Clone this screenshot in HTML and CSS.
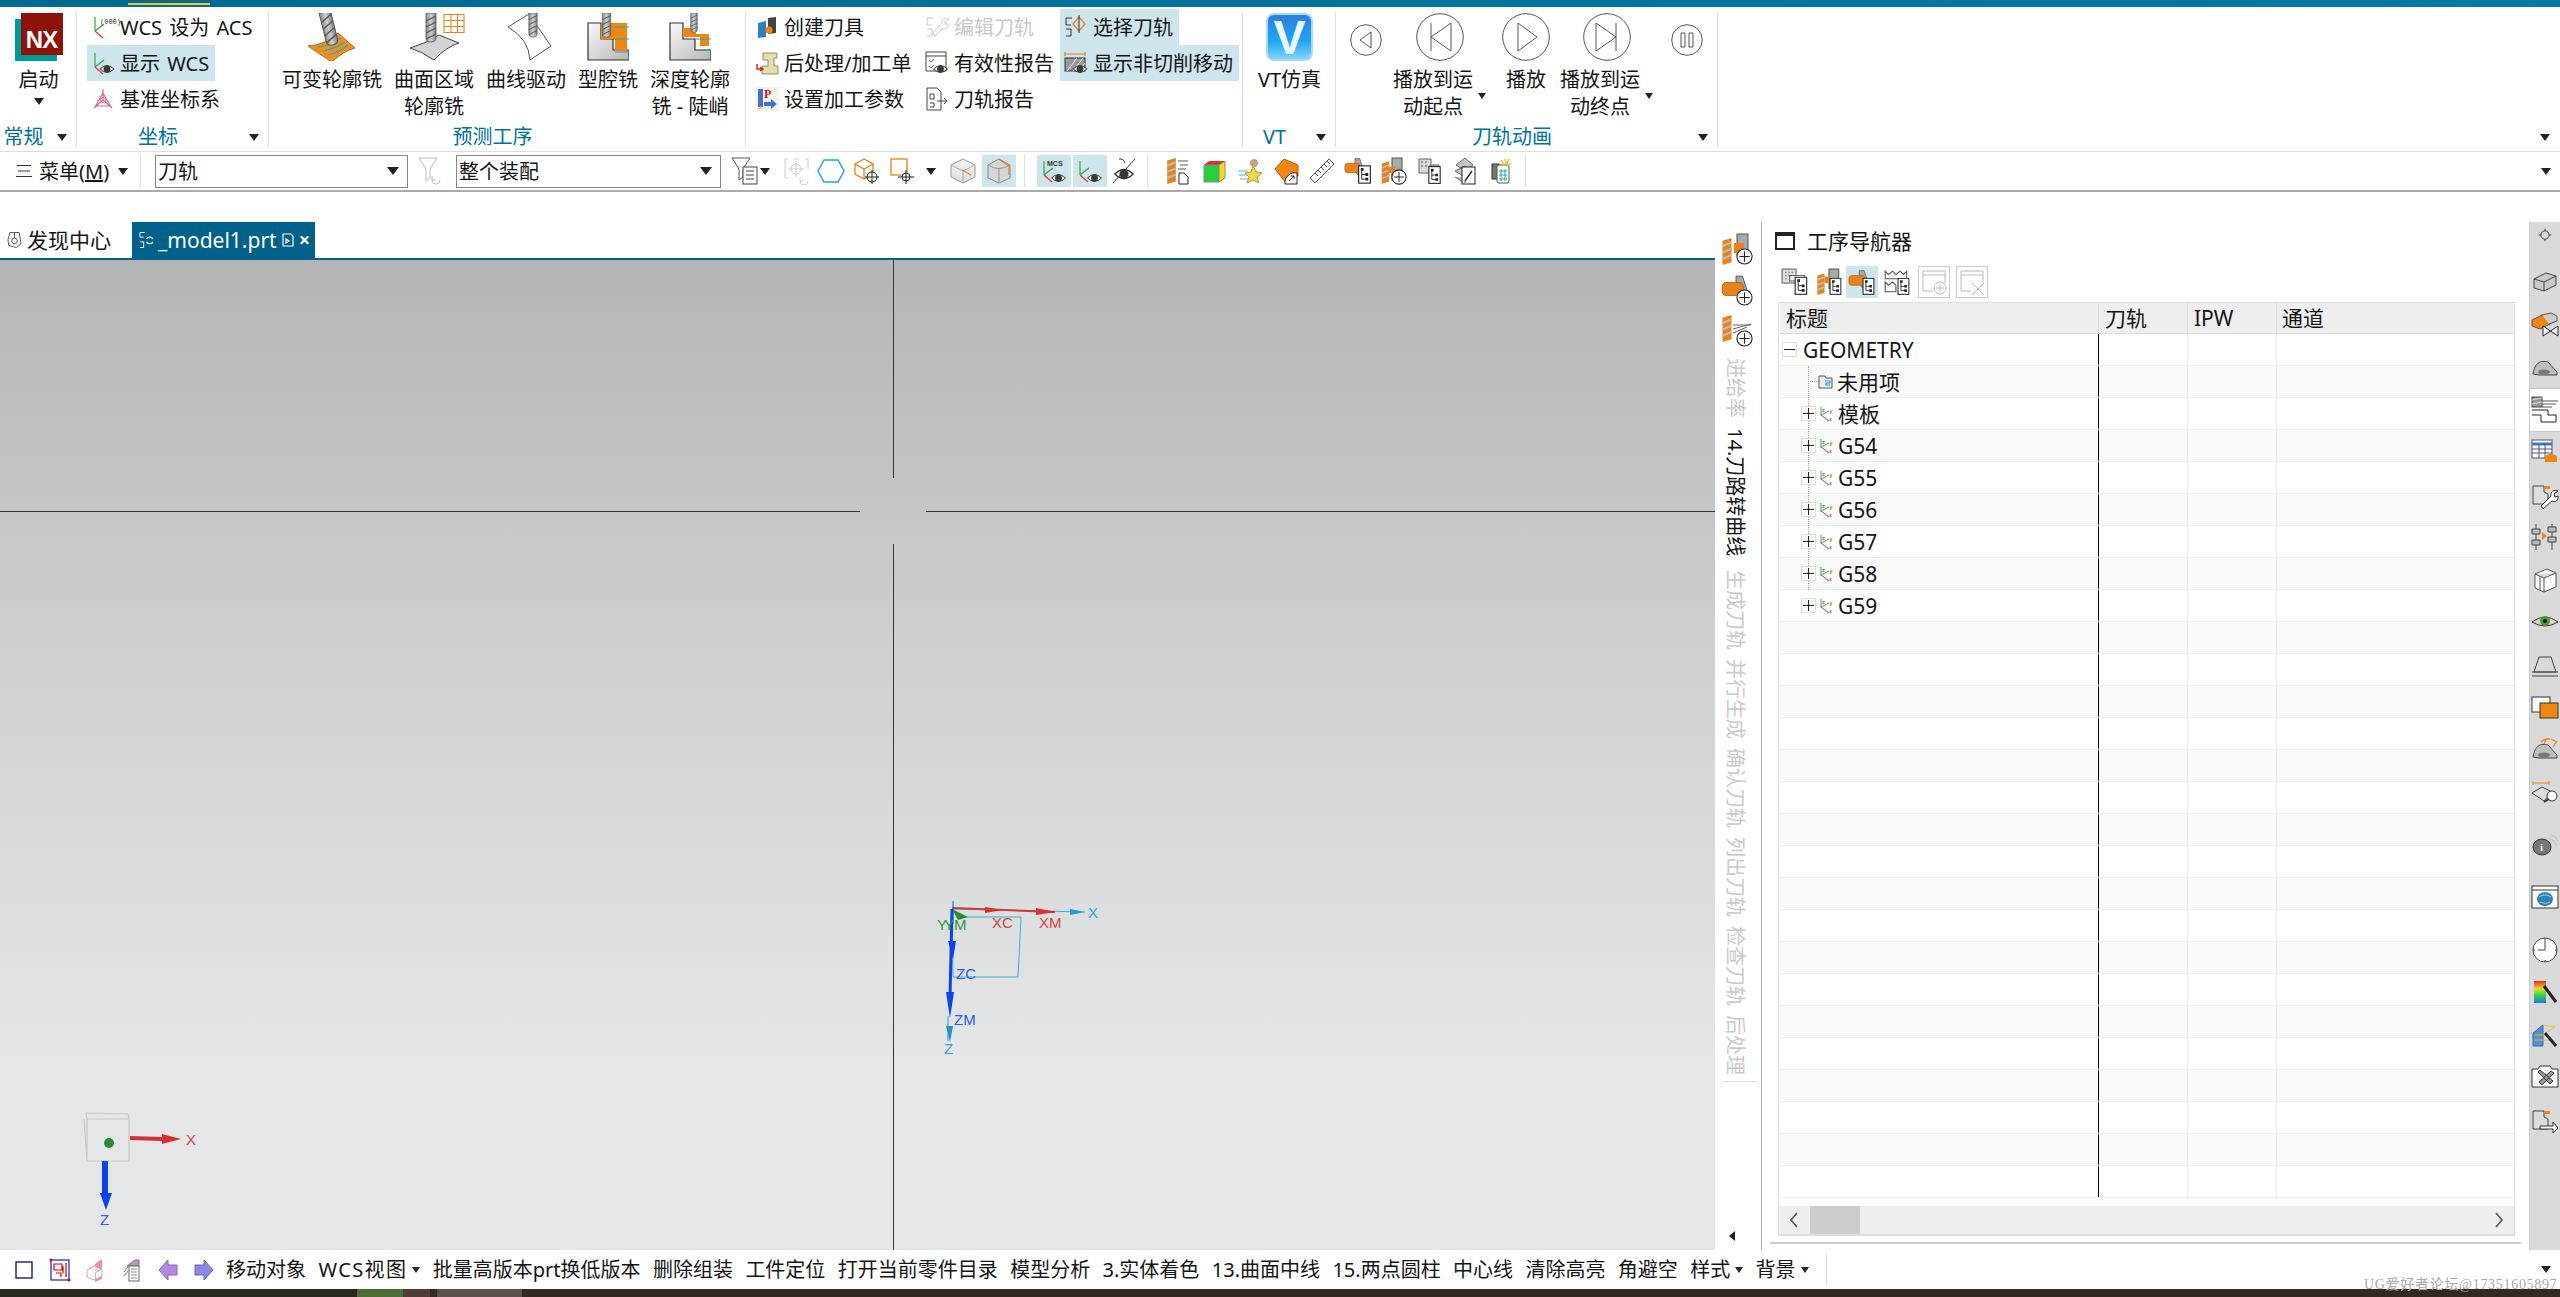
FILE: index.html
```html
<!DOCTYPE html>
<html lang="zh-CN">
<head>
<meta charset="utf-8">
<title>NX</title>
<link rel="stylesheet" href="styles.css">
</head>
<body>
<svg class="defs" width="0" height="0" aria-hidden="true">
  <defs>
    <linearGradient id="gDrill" x1="0" x2="1" y1="0" y2="0"><stop offset="0" stop-color="#8e8e8e"/><stop offset=".5" stop-color="#cfcfcf"/><stop offset="1" stop-color="#7d7d7d"/></linearGradient>
    <linearGradient id="gBlock" x1="0" x2="1" y1="0" y2="1"><stop offset="0" stop-color="#fafafa"/><stop offset="1" stop-color="#b5b5b5"/></linearGradient>
    <linearGradient id="gTop" x1="0" x2="0" y1="0" y2="1"><stop offset="0" stop-color="#f2f3f4"/><stop offset="1" stop-color="#dcdddf"/></linearGradient>
    <symbol id="drill" viewBox="0 0 12 30"><path d="M1 0h10v25q0 4-5 4t-5-4z" fill="url(#gDrill)" stroke="#555" stroke-width=".8"/><path d="M1 8l10-5M1 14l10-5M1 20l10-5M1 26l10-5" stroke="#555" stroke-width="1.2"/></symbol>
    <symbol id="ocut" viewBox="0 0 12 30"><path d="M1 3l10-3v27l-10 3z" fill="#e8821a"/><path d="M1 9l10-4M1 16l10-4M1 23l10-4" stroke="#bdbdbd" stroke-width="2.4"/></symbol>
    <symbol id="tree" viewBox="0 0 14 20"><rect x=".7" y=".7" width="12.6" height="18.6" fill="#fff" stroke="#222" stroke-width="1.2"/><path d="M4 5v10h5M4 10h5" fill="none" stroke="#222"/><path d="M3 3h3v3H3zM8 8.500h3v3H8zM8 13.500h3v3H8z" fill="#222"/></symbol>
    <symbol id="eye" viewBox="0 0 18 14"><path d="M1 7Q9-1 17 7Q9 15 1 7Z" fill="#fff" stroke="#333" stroke-width="1.200"/><circle cx="9" cy="7" r="4" fill="#3a3a3a"/></symbol>
    <symbol id="axes" viewBox="0 0 24 24"><path d="M4 2v14" stroke="#2eaa3c" stroke-width="1.200"/><path d="M4 16L13 9" stroke="#2eaa3c" stroke-width="1.200"/><path d="M4 16l8 7" stroke="#e8303a" stroke-width="1.200"/></symbol>
    <symbol id="csys" viewBox="0 0 15 16"><path d="M2 1v8l8-4" fill="none" stroke="#2eaa3c"/><path d="M2 9l8 6" stroke="#e8303a"/><text x="3" y="6" class="tiny">z</text><text x="10.500" y="7" class="tiny">y</text><text x="10" y="15" class="tiny">x</text></symbol>
    <symbol id="cyl" viewBox="0 0 28 28"><path d="M14 2l6 0 6 18-6 6-6-8z" fill="#a8a8a8" stroke="#444" stroke-width=".8"/><path d="M4 8h13q4 0 4 6t-4 6H4q-3 0-3-6t3-6z" fill="#e8821a" stroke="#b35d0a" stroke-width=".8"/></symbol>
    <symbol id="plus" viewBox="0 0 18 18"><circle cx="9" cy="9" r="8" fill="#fff" stroke="#222" stroke-width="1.200"/><path d="M9 3.500v11M3.500 9h11" stroke="#222" stroke-width="1.100"/></symbol>
    <symbol id="part" viewBox="0 0 28 28"><path d="M3 11l12-6 10 3v9l-12 6-10-3z" fill="#c9c9c9" stroke="#444"/><path d="M3 11l10 3 12-6M13 14v9" fill="none" stroke="#444"/></symbol>
    <symbol id="tool2" viewBox="0 0 28 28"><path d="M2 21c2-12 8-14 15-12l9 10v3H8z" fill="#bdbdbd" stroke="#444"/><ellipse cx="13" cy="19" rx="6" ry="2.500" fill="#777"/></symbol>
  </defs>
</svg>

<div class="topbar"><span class="accent"></span></div>

<header class="ribbon">
  <section class="group g1">
    <div class="body center">
      <div class="tool">
        <div class="nx"><span class="nx-red">NX</span></div>
        <span class="label">启动</span>
        <span class="tri tri-start"></span>
      </div>
    </div>
    <div class="glabel"><span>常规</span><i class="tri"></i></div>
  </section>

  <section class="group g2">
    <div class="body stack">
      <div class="row"><svg class="ic"><use href="#axes"/><text x="9" y="9" class="tiny2">(000)</text></svg><span>WCS 设为 ACS</span></div>
      <div class="row on"><svg class="ic"><use href="#axes"/><use href="#eye" x="8" y="12" width="16" height="12"/></svg><span>显示 WCS</span></div>
      <div class="row"><svg class="ic" viewBox="0 0 24 24"><path d="M12 2v11L3 21M12 13l9 8M5 19h14M12 6L4 20M12 6l8 14" fill="none" stroke="#d9668c" stroke-width="1.200"/><circle cx="12" cy="13" r="2.500" fill="none" stroke="#d9668c"/></svg><span>基准坐标系</span></div>
    </div>
    <div class="glabel"><span>坐标</span><i class="tri"></i></div>
  </section>

  <section class="group g3">
    <div class="body tools">
      <div class="tool">
        <svg class="big" viewBox="0 0 62 48"><path d="M7 33Q24 32 37 20L54 35Q42 38 31 49Q20 42 7 33Z" fill="#ef8f1c" stroke="#b86a0c"/><path d="M16 34Q30 33 40 25M22 38Q34 36 44 29M27 42Q38 39 47 32" fill="none" stroke="#2aa7c9" stroke-width="1.200"/><use href="#drill" x="21" y="-2" width="14" height="36" transform="rotate(-14 28 16)"/></svg>
        <span class="label">可变轮廓铣</span>
      </div>
      <div class="tool">
        <svg class="big" viewBox="0 0 62 48"><path d="M7 35Q22 31 36 22L56 30Q43 34 31 47Q20 39 7 35Z" fill="#d4d4d4" stroke="#444"/><use href="#drill" x="21" y="0" width="14" height="30"/><path d="M41 1.500h20v18H41zM48 1.500v18M54.500 1.500v18M41 7.500h20M41 13.500h20" fill="#fff" stroke="#e8821a" stroke-width="1.100"/></svg>
        <span class="label">曲面区域<br>轮廓铣</span>
      </div>
      <div class="tool">
        <svg class="big" viewBox="0 0 62 48"><path d="M13 14L34 1 56 33 35 47Q34 26 13 14Z" fill="#fff" stroke="#555"/><use href="#drill" x="31" y="0" width="14" height="25"/></svg>
        <span class="label">曲线驱动</span>
      </div>
      <div class="tool">
        <svg class="big big-s" viewBox="0 0 42 48"><path d="M1 10h13v16h12v11h16v10H1z" fill="url(#gBlock)" stroke="#333" stroke-width="1.200"/><path d="M14 10h26v28H28V26H14z" fill="#ef860f"/><use href="#drill" x="13" y="0" width="13" height="25"/><path d="M28 14h14M28 26h14M28 39h14" stroke="#1ea3c7" stroke-width="1.200"/></svg>
        <span class="label">型腔铣</span>
      </div>
      <div class="tool">
        <svg class="big big-s" viewBox="0 0 42 48"><path d="M1 10h13v16h12v11h16v10H1z" fill="url(#gBlock)" stroke="#333" stroke-width="1.200"/><path d="M14 15h13v6h13v12h-9V24H14z" fill="#ef860f"/><use href="#drill" x="20" y="0" width="10" height="20"/><path d="M26 26h16M32 37h10" stroke="#1ea3c7" stroke-width="1.200"/></svg>
        <span class="label">深度轮廓<br>铣 - 陡峭</span>
      </div>
    </div>
    <div class="glabel"><span>预测工序</span><i class="none"></i></div>
  </section>

  <section class="group g4">
    <div class="body cols">
      <div class="stack col-a">
        <div class="row"><svg class="ic" viewBox="0 0 24 24"><path d="M3 8l8-2v16l-8 1z" fill="#2c7fc0"/><path d="M13 3l8-1v16l-8 1z" fill="#444"/><circle cx="14" cy="15" r="3.500" fill="#ef860f"/></svg><span>创建刀具</span></div>
        <div class="row"><svg class="ic" viewBox="0 0 24 24"><path d="M8 2h14v5h-3v8h4v8H7v-8h6V9H8z" fill="#e4e0a8" stroke="#777" stroke-width=".8"/><path d="M2 13v5h6M5 16l3 2-3 2" fill="none" stroke="#e02020" stroke-width="1.500"/></svg><span>后处理/加工单</span></div>
        <div class="row"><svg class="ic" viewBox="0 0 24 24"><rect width="24" height="24" fill="#f3f3ec"/><path d="M3 2h5v18H3z" fill="#3f6fd0"/><text x="9" y="11" class="p">P</text><path d="M9 15h7v-3l6 5-6 5v-3H9z" fill="#3f6fd0"/><path d="M2 22l4-3 2 3z" fill="#ecd34a"/></svg><span>设置加工参数</span></div>
      </div>
      <div class="stack col-b">
        <div class="row off"><svg class="ic" viewBox="0 0 24 24"><path d="M8 3H2v7h5M2 14h5v7H2" fill="none" stroke="#c8c8c8"/><path d="M8 17l9-9c0-4 4-6 7-4l-4 3v2h3c1 4-3 6-6 5l-7 7z" fill="#fff" stroke="#c8c8c8"/></svg><span>编辑刀轨</span></div>
        <div class="row"><svg class="ic" viewBox="0 0 24 24"><path d="M1 1h20v19H1zM1 5h20" fill="#fff" stroke="#444"/><path d="M4 9l2 2 3-3" fill="none" stroke="#2aa83a"/><path d="M4 15l2 2 3-3" fill="none" stroke="#e02020"/><use href="#eye" x="7" y="12" width="17" height="12"/></svg><span>有效性报告</span></div>
        <div class="row"><svg class="ic" viewBox="0 0 24 24"><path d="M2 1h10l4 4v18H2zM5 7h4v5H5zM5 16h4v4H5" fill="#fff" stroke="#444"/><path d="M12 14h10M19 11l3 3-3 3" fill="none" stroke="#444"/></svg><span>刀轨报告</span></div>
      </div>
      <div class="stack">
        <div class="row on"><svg class="ic" viewBox="0 0 24 24"><path d="M8 3H2v7h5M2 14h5v7H2" fill="none" stroke="#333"/><path d="M15 2l6 7-6 7-6-7z" fill="none" stroke="#e8821a" stroke-width="1.300"/><path d="M15 0v18" stroke="#333"/></svg><span>选择刀轨</span></div>
        <div class="row on"><svg class="ic" viewBox="0 0 24 24"><path d="M1 3h20M1 1v4M21 1v4" stroke="#e8821a" stroke-width="1.200"/><rect x="1" y="7" width="20" height="13" fill="#9a9a9a" stroke="#333"/><path d="M3 20l10-13M9 20l10-13M15 20l6-8" stroke="#fff"/><use href="#eye" x="8" y="12" width="16" height="12"/></svg><span>显示非切削移动</span></div>
      </div>
    </div>
    <div class="glabel"><span class="hidden">工序</span><i class="none"></i></div>
  </section>

  <section class="group g5">
    <div class="body center">
      <div class="tool">
        <div class="vt"><span>V</span></div>
        <span class="label">VT仿真</span>
      </div>
    </div>
    <div class="glabel"><span>VT</span><i class="tri"></i></div>
  </section>

  <section class="group g6">
    <div class="body anim">
      <svg class="ctl-s" viewBox="0 0 32 32"><circle cx="16" cy="16" r="15.300" fill="none" stroke="#555"/><path d="M21 8v16L10 16z" fill="none" stroke="#555"/></svg>
      <div class="tool more first-more">
        <svg class="ctl ctl-off" viewBox="0 0 48 48"><circle cx="24" cy="24" r="23.300" fill="none" stroke="#555"/><path d="M15 10v28M35 10v28L15 24z" fill="none" stroke="#555"/></svg>
        <span class="label">播放到运<br>动起点</span>
        <i class="tri tri-more"></i>
      </div>
      <div class="tool play">
        <svg class="ctl" viewBox="0 0 48 48"><circle cx="24" cy="24" r="23.300" fill="none" stroke="#555"/><path d="M16 10v28l19-14z" fill="none" stroke="#555"/></svg>
        <span class="label">播放</span>
      </div>
      <div class="tool more">
        <svg class="ctl ctl-off" viewBox="0 0 48 48"><circle cx="24" cy="24" r="23.300" fill="none" stroke="#555"/><path d="M33 10v28M13 10v28l20-14z" fill="none" stroke="#555"/></svg>
        <span class="label">播放到运<br>动终点</span>
        <i class="tri tri-more"></i>
      </div>
      <svg class="ctl-s" viewBox="0 0 32 32"><circle cx="16" cy="16" r="15.300" fill="none" stroke="#555"/><path d="M10 9h4v14h-4zM18 9h4v14h-4z" fill="none" stroke="#555"/></svg>
    </div>
    <div class="glabel"><span>刀轨动画</span><i class="tri"></i></div>
  </section>

  <section class="group g7">
    <div class="body"></div>
    <div class="glabel"><span class="hidden">空</span><i class="tri"></i></div>
  </section>
</header>

<nav class="toolbar">
  <svg class="burger" viewBox="0 0 16 14"><path d="M1 1.500h14M2 7h12M0 12.500h16" stroke="#333"/></svg>
  <span class="menu">菜单(<u>M</u>)</span><i class="tri tri-menu"></i>
  <span class="vsep sep-menu"></span>
  <div class="select sel-a"><span>刀轨</span><i class="tri tri-big"></i></div>
  <svg class="btn-ic funnel" viewBox="0 0 26 28"><path d="M1 1h18l-7 11v9l-4 3V12z" fill="#fff" stroke="#bbb"/><path d="M14 23a4 4 0 1 0 8 0M14 19v4h4" fill="none" stroke="#bbb"/></svg>
  <div class="select sel-b"><span>整个装配</span><i class="tri tri-big"></i></div>
  <button class="tb w30 ml9"><svg viewBox="0 0 28 28"><path d="M1 1h18l-7 11v8l-4 3V12z" fill="#fff" stroke="#555"/><rect x="12" y="10" width="14" height="17" fill="#fff" stroke="#444"/><path d="M15 14h8M15 18h8M15 22h8" stroke="#444"/></svg></button>
  <i class="tri tri-tb"></i>
  <button class="tb ml10"><svg viewBox="0 0 28 28"><path d="M5 2H2v19h3M22 2h3v10M11 2h5" fill="none" stroke="#ccc"/><circle cx="13" cy="12" r="5" fill="none" stroke="#ccc"/><path d="M13 4v16M5 12h16M17 24a4 4 0 1 0 8 0M17 20v4h4" fill="none" stroke="#ccc"/></svg></button>
  <button class="tb"><svg viewBox="0 0 28 28"><path d="M7 3h14l6 11-6 11H7L1 14z" fill="none" stroke="#19a5d6" stroke-width="1.400"/></svg></button>
  <button class="tb ml3"><svg viewBox="0 0 28 28"><path d="M1 7l9-5 9 5v10l-9 5-9-5zM1 7l9 5 9-5M10 12v10" fill="none" stroke="#e8821a" stroke-width="1.300"/><circle cx="18" cy="20" r="5" fill="#fff" stroke="#222"/><path d="M18 13v14M11 20h14" stroke="#222"/></svg></button>
  <button class="tb ml1"><svg viewBox="0 0 28 28"><rect x="2" y="2" width="16" height="16" fill="none" stroke="#e8821a" stroke-width="1.300"/><circle cx="17" cy="20" r="4" fill="#fff" stroke="#222"/><path d="M17 13v14M9 20h16" stroke="#222"/></svg></button>
  <i class="tri tri-tb ml6"></i>
  <button class="tb ml10"><svg viewBox="0 0 28 28"><path d="M2 8l12-6 12 6v12l-12 6-12-6z" fill="url(#gTop)" stroke="#999"/><path d="M2 8l12 6 12-6M14 14v12" fill="none" stroke="#aaa"/><path d="M13 13l9 5" stroke="#e8821a" stroke-width="1.300"/></svg></button>
  <button class="tb on ml2"><svg viewBox="0 0 28 28"><path d="M3 8l11-6 11 6v13l-11 5-11-5z" fill="#d6d6d6" stroke="#888"/><path d="M3 8q11 7 22 0M14 12v14" fill="none" stroke="#999"/><path d="M14 2l10 7v9" fill="none" stroke="#e8821a" stroke-width="1.200"/></svg></button>
  <span class="vsep sep-a"></span>
  <button class="tb on"><svg viewBox="0 0 28 28"><use href="#axes" x="0" y="2" width="24" height="24"/><text x="7" y="9" class="tiny3">MCS</text><use href="#eye" x="10" y="15" width="17" height="12"/></svg></button>
  <button class="tb on ml2"><svg viewBox="0 0 28 28"><use href="#axes" x="0" y="2" width="24" height="24"/><use href="#eye" x="10" y="15" width="17" height="12"/></svg></button>
  <button class="tb"><svg viewBox="0 0 28 28"><use href="#eye" x="3" y="9" width="22" height="16"/><path d="M3 26L25 2M9 2a5 5 0 0 1 6 4" fill="none" stroke="#333"/></svg></button>
  <span class="vsep sep-b"></span>
  <button class="tb t36"><svg viewBox="0 0 28 28"><use href="#ocut" x="2" y="1" width="11" height="26"/><path d="M14 4h10M16 8h8M14 12h8" stroke="#555"/><path d="M15 16h5l4 4v7h-9z" fill="#fff" stroke="#222"/></svg></button>
  <button class="tb t36"><svg viewBox="0 0 28 28"><path d="M4 8l5-4h16v4l-5 4z" fill="#e62b2b"/><rect x="4" y="8" width="15" height="17" fill="#22d13c" stroke="#888"/><path d="M19 8l6-4v17l-6 4z" fill="#f1dd1d" stroke="#888"/></svg></button>
  <button class="tb t36"><svg viewBox="0 0 28 28"><path d="M2 14h10M3 18h9M4 22h9" stroke="#5fa9e0"/><path d="M17 9l3 6 6 1-5 4 2 6-6-3-6 3 2-6-4-4 6-1z" fill="#f3d552" stroke="#b79a20"/><circle cx="18" cy="6" r="4" fill="#c8a47e"/></svg></button>
  <button class="tb t36"><svg viewBox="0 0 28 28"><path d="M3 12L12 2l14 6v11l-12 7z" fill="#ef860f" stroke="#b35d0a"/><path d="M13 27a10 10 0 0 1 12-11v11z" fill="#fff" stroke="#222"/><path d="M17 24l5-5M19 19h3v3" fill="none" stroke="#222"/></svg></button>
  <button class="tb t36"><svg viewBox="0 0 28 28"><path d="M2 21L21 2l5 5L7 26z" fill="#fff" stroke="#555"/><path d="M7 16l3 3M10 13l3 3M13 10l3 3M16 7l3 3M19 4l3 3" stroke="#555"/></svg></button>
  <button class="tb t36"><svg viewBox="0 0 28 28"><use href="#cyl" x="0" y="0" width="22" height="22"/><use href="#tree" x="14" y="8" width="13" height="19"/></svg></button>
  <button class="tb t36"><svg viewBox="0 0 28 28"><use href="#ocut" x="1" y="4" width="9" height="23"/><rect x="12" y="1" width="10" height="22" fill="#aaa" stroke="#555"/><rect x="8" y="10" width="7" height="6" fill="#e8821a"/><use href="#plus" x="11" y="12" width="16" height="16"/></svg></button>
  <button class="tb t36"><svg viewBox="0 0 28 28"><path d="M3 2h12v14H3z" fill="#d8d8d8" stroke="#666"/><path d="M5 5h2M9 5h2M5 9h2M9 9h2" stroke="#555"/><path d="M14 8h9v3H14z" fill="#bbb" stroke="#666"/><use href="#tree" x="12" y="9" width="13" height="18"/></svg></button>
  <button class="tb t36"><svg viewBox="0 0 28 28"><path d="M4 8l9-7 8 7-8 6zM3 14l10 6 9-6-9-5zM3 20l10 6 9-6" fill="#c4c4c4" stroke="#666"/><rect x="10" y="10" width="13" height="17" fill="#fff" stroke="#222"/><path d="M13 24l7-10" stroke="#222" stroke-width="1.400"/><path d="M12 25l2 0" stroke="#e02020"/></svg></button>
  <button class="tb t36"><svg viewBox="0 0 28 28"><rect x="4" y="7" width="7" height="15" fill="#777" stroke="#333"/><rect x="9" y="8" width="12" height="18" rx="2" fill="#fff" stroke="#555"/><path d="M11 14h8M11 18h8M11 22h8M13 12v12M17 12v12" stroke="#27a2a6"/><path d="M17 2l1 5M21 2l-2 5M23 6l-4 3M13 3l3 5" stroke="#e1c21c" stroke-width="1.400"/></svg></button>
  <span class="vsep sep-c"></span>
  <i class="tri tri-end"></i>
</nav>

<main class="main">
  <div class="left">
    <div class="tabs">
      <div class="tab"><svg class="tab-ic" viewBox="0 0 16 18"><path d="M3 1h10l2 12-5 4-8-2-1-6z" fill="#fff" stroke="#555"/><circle cx="8" cy="10" r="3" fill="none" stroke="#555"/><path d="M8 1v6" stroke="#555"/></svg><span>发现中心</span></div>
      <div class="tab tab-on">
        <svg class="tab-ic2" viewBox="0 0 16 18"><path d="M6 1H1v5h4M1 11h4v6H1" fill="none" stroke="#fff"/><path d="M8 8a4 4 0 0 1 7 0M15 11a4 4 0 0 1-7 0" fill="none" stroke="#fff" stroke-width="1.200"/></svg>
        <span>_model1.prt</span>
        <svg class="tab-ic3" viewBox="0 0 12 14"><path d="M1 1h8l2 2v10H1zM4 6l3 2-3 2z" fill="none" stroke="#fff" stroke-width="1.200"/></svg>
        <span class="close">×</span>
      </div>
    </div>
    <div class="viewport">
      <span class="cross v1"></span><span class="cross v2"></span><span class="cross h1"></span><span class="cross h2"></span>
      <svg class="triad-main" viewBox="0 0 240 190">
        <path d="M52 36L53 98H118L121 38H56" fill="none" stroke="#3cafd8" stroke-width="1"/>
        <path d="M53 22V45" stroke="#19a5d6" stroke-width="1.500"/>
        <path d="M52 30L185 33" stroke="#3cafd8"/>
        <path d="M170 30l15 3-15 3z" fill="#1d9dd0"/>
        <path d="M52 29L155 33" stroke="#c93a3a" stroke-width="2"/>
        <path d="M85 28l18 3-18 3zM136 29l20 4-20 3z" fill="#d83232"/>
        <path d="M52 30L68 38 58 41z" fill="#2a8a34"/>
        <path d="M48 137V162" stroke="#2a9ed0"/>
        <path d="M46 147h7l-3 16z" fill="#1d94c6"/>
        <path d="M52 30L50 118" stroke="#0b43ea" stroke-width="3"/>
        <path d="M46 113h8l-4 26zM48 62h8l-3 18z" fill="#0b43ea"/>
        <text x="92" y="49" class="tr red">XC</text>
        <text x="139" y="49" class="tr red">XM</text>
        <text x="188" y="39" class="tr cyan">X</text>
        <text x="37" y="51" class="tr green">Y</text>
        <text x="44" y="51" class="tr green">YM</text>
        <text x="56" y="100" class="tr blue">ZC</text>
        <text x="54" y="146" class="tr blue">ZM</text>
        <text x="44" y="175" class="tr cyan">Z</text>
      </svg>
      <svg class="triad-mini" viewBox="0 0 170 150">
        <path d="M36 24l42 1 1 5H37zM37 30v42h42V30M34 30l3 42" fill="none" stroke="#c9c9c9" stroke-width="1.200"/>
        <circle cx="59" cy="54" r="5" fill="#2a8a34"/>
        <path d="M80 47l32 1v-3l19 5-19 5v-3l-32-1z" fill="#d62f33"/>
        <path d="M52 72h6v32h4l-6 17-6-17h2z" fill="#0b43ea"/>
        <text x="136" y="56" class="tr red">X</text>
        <text x="50" y="136" class="tr blue">Z</text>
      </svg>
    </div>
  </div>

  <aside class="side">
    <svg class="side-ic" viewBox="0 0 32 32"><use href="#ocut" x="0" y="5" width="12" height="27"/><rect x="16" y="1" width="11" height="21" fill="#aaa" stroke="#555"/><rect x="13" y="10" width="10" height="10" fill="#e8821a"/><use href="#plus" x="15" y="15" width="17" height="17"/></svg>
    <svg class="side-ic" viewBox="0 0 32 32"><use href="#cyl" x="0" y="0" width="30" height="30"/><use href="#plus" x="15" y="15" width="17" height="17"/></svg>
    <svg class="side-ic" viewBox="0 0 32 32"><use href="#ocut" x="0" y="0" width="12" height="27"/><path d="M12 10h18M12 14l18-5M12 18l14-6" stroke="#666"/><use href="#plus" x="15" y="15" width="17" height="17"/></svg>
    <div class="vtabs">
      <span class="vt-off">进给率</span>
      <span class="vt-on">14.刀路转曲线</span>
      <span class="vt-off">生成刀轨</span>
      <span class="vt-off">并行生成</span>
      <span class="vt-off">确认刀轨</span>
      <span class="vt-off">列出刀轨</span>
      <span class="vt-off">检查刀轨</span>
      <span class="vt-off">后处理</span>
    </div>
    <span class="side-rule"></span>
    <i class="tri-left"></i>
  </aside>

  <section class="panel">
    <div class="ptitle"><span class="winbox"></span><span>工序导航器</span></div>
    <div class="pbtns">
      <button class="pb"><svg viewBox="0 0 26 26"><rect x="1" y="1" width="13" height="13" fill="#ddd" stroke="#666"/><path d="M4 4h1M7 4h1M10 4h1M4 7h1M7 7h1M4 10h1" stroke="#444"/><path d="M8 7h14v5H8z" fill="#eee" stroke="#666"/><use href="#tree" x="12" y="8" width="13" height="17"/></svg></button>
      <button class="pb"><svg viewBox="0 0 26 26"><use href="#ocut" x="1" y="5" width="9" height="20"/><rect x="13" y="1" width="9" height="18" fill="#aaa" stroke="#555"/><rect x="9" y="8" width="6" height="6" fill="#e8821a"/><use href="#tree" x="13" y="9" width="12" height="16"/></svg></button>
      <button class="pb on"><svg viewBox="0 0 26 26"><use href="#cyl" x="0" y="1" width="21" height="21"/><use href="#tree" x="13" y="9" width="12" height="16"/></svg></button>
      <button class="pb"><svg viewBox="0 0 26 26"><path d="M2 3l3 3 4-3 3 3 4-3 3 3 3-3v7H2zM2 13l3 3 4-3 3 3v6H2z" fill="#fff" stroke="#555"/><use href="#tree" x="13" y="9" width="12" height="16"/></svg></button>
      <button class="pb box"><svg viewBox="0 0 30 30"><path d="M4 24V4h22v12M4 8h22M4 24h10" fill="none" stroke="#bbb"/><circle cx="21" cy="21" r="6" fill="#fff" stroke="#bbb"/><path d="M21 17v8M17 21h8" stroke="#bbb"/></svg></button>
      <button class="pb box"><svg viewBox="0 0 30 30"><path d="M4 24V4h22v12M4 8h22M4 24h10M15 16l12 12M27 16L15 28" fill="none" stroke="#bbb"/></svg></button>
    </div>
    <div class="table">
      <div class="thead">
        <span class="c1">标题</span><span class="c2">刀轨</span><span class="c3">IPW</span><span class="c4">通道</span>
      </div>
      <div class="tbody">
        <span class="dots"></span>
        <div class="tr-row"><div class="c1 lvl0"><span class="tw"><i class="h"></i></span><span class="nm">GEOMETRY</span></div><div class="c2"></div><div class="c3"></div><div class="c4"></div></div>
        <div class="tr-row"><div class="c1 lvl1"><span class="tw-none"></span><svg class="node" viewBox="0 0 15 16"><path d="M1 2h6l1 2h6v10H1z" fill="#eee" stroke="#555"/><path d="M7 7h5v2H8v2h4" fill="none" stroke="#19a5d6" stroke-width="1.200"/></svg><span class="nm">未用项</span></div><div class="c2"></div><div class="c3"></div><div class="c4"></div></div>
        <div class="tr-row"><div class="c1 lvl1"><span class="tw"><i class="h"></i><i class="v"></i></span><svg class="node"><use href="#csys"/></svg><span class="nm">模板</span></div><div class="c2"></div><div class="c3"></div><div class="c4"></div></div>
        <div class="tr-row"><div class="c1 lvl1"><span class="tw"><i class="h"></i><i class="v"></i></span><svg class="node"><use href="#csys"/></svg><span class="nm">G54</span></div><div class="c2"></div><div class="c3"></div><div class="c4"></div></div>
        <div class="tr-row"><div class="c1 lvl1"><span class="tw"><i class="h"></i><i class="v"></i></span><svg class="node"><use href="#csys"/></svg><span class="nm">G55</span></div><div class="c2"></div><div class="c3"></div><div class="c4"></div></div>
        <div class="tr-row"><div class="c1 lvl1"><span class="tw"><i class="h"></i><i class="v"></i></span><svg class="node"><use href="#csys"/></svg><span class="nm">G56</span></div><div class="c2"></div><div class="c3"></div><div class="c4"></div></div>
        <div class="tr-row"><div class="c1 lvl1"><span class="tw"><i class="h"></i><i class="v"></i></span><svg class="node"><use href="#csys"/></svg><span class="nm">G57</span></div><div class="c2"></div><div class="c3"></div><div class="c4"></div></div>
        <div class="tr-row"><div class="c1 lvl1"><span class="tw"><i class="h"></i><i class="v"></i></span><svg class="node"><use href="#csys"/></svg><span class="nm">G58</span></div><div class="c2"></div><div class="c3"></div><div class="c4"></div></div>
        <div class="tr-row"><div class="c1 lvl1"><span class="tw"><i class="h"></i><i class="v"></i></span><svg class="node"><use href="#csys"/></svg><span class="nm">G59</span></div><div class="c2"></div><div class="c3"></div><div class="c4"></div></div>
        <div class="tr-row"><div class="c1"></div><div class="c2"></div><div class="c3"></div><div class="c4"></div></div>
        <div class="tr-row"><div class="c1"></div><div class="c2"></div><div class="c3"></div><div class="c4"></div></div>
        <div class="tr-row"><div class="c1"></div><div class="c2"></div><div class="c3"></div><div class="c4"></div></div>
        <div class="tr-row"><div class="c1"></div><div class="c2"></div><div class="c3"></div><div class="c4"></div></div>
        <div class="tr-row"><div class="c1"></div><div class="c2"></div><div class="c3"></div><div class="c4"></div></div>
        <div class="tr-row"><div class="c1"></div><div class="c2"></div><div class="c3"></div><div class="c4"></div></div>
        <div class="tr-row"><div class="c1"></div><div class="c2"></div><div class="c3"></div><div class="c4"></div></div>
        <div class="tr-row"><div class="c1"></div><div class="c2"></div><div class="c3"></div><div class="c4"></div></div>
        <div class="tr-row"><div class="c1"></div><div class="c2"></div><div class="c3"></div><div class="c4"></div></div>
        <div class="tr-row"><div class="c1"></div><div class="c2"></div><div class="c3"></div><div class="c4"></div></div>
        <div class="tr-row"><div class="c1"></div><div class="c2"></div><div class="c3"></div><div class="c4"></div></div>
        <div class="tr-row"><div class="c1"></div><div class="c2"></div><div class="c3"></div><div class="c4"></div></div>
        <div class="tr-row"><div class="c1"></div><div class="c2"></div><div class="c3"></div><div class="c4"></div></div>
        <div class="tr-row"><div class="c1"></div><div class="c2"></div><div class="c3"></div><div class="c4"></div></div>
        <div class="tr-row"><div class="c1"></div><div class="c2"></div><div class="c3"></div><div class="c4"></div></div>
        <div class="tr-row"><div class="c1"></div><div class="c2"></div><div class="c3"></div><div class="c4"></div></div>
        <div class="tr-row"><div class="c1"></div><div class="c2"></div><div class="c3"></div><div class="c4"></div></div>
        <div class="tr-row"><div class="c1"></div><div class="c2"></div><div class="c3"></div><div class="c4"></div></div>
      </div>
      <div class="hscroll">
        <svg class="sc-arrow" viewBox="0 0 10 16"><path d="M8 1L2 8l6 7" fill="none" stroke="#555" stroke-width="1.600"/></svg>
        <span class="thumb"></span>
        <svg class="sc-arrow sc-right" viewBox="0 0 10 16"><path d="M2 1l6 7-6 7" fill="none" stroke="#555" stroke-width="1.600"/></svg>
      </div>
    </div>
    <div class="pfoot"></div>
  </section>

  <aside class="rail">
    <button class="rb first"><svg viewBox="0 0 26 26"><circle cx="13" cy="13" r="6" fill="none" stroke="#333" stroke-width="1.300"/><path d="M13 4v3M13 19v3M4 13h3M19 13h3" stroke="#333" stroke-width="1.300"/></svg></button>
    <button class="rb second"><svg viewBox="0 0 28 28"><use href="#part"/></svg></button>
    <button class="rb"><svg viewBox="0 0 28 28"><path d="M1 9l10-5 8 3v6l-10 5-8-3z" fill="#ef860f" stroke="#555"/><path d="M11 4l9-2 6 3v5l-8 3" fill="#ccc" stroke="#555"/><path d="M12 15l15 10V15L12 25z" fill="#fff" stroke="#222"/></svg></button>
    <button class="rb"><svg viewBox="0 0 28 28"><use href="#tool2"/></svg></button>
    <button class="rb active"><svg viewBox="0 0 28 28"><rect x="1" y="1" width="10" height="10" fill="#999" stroke="#444"/><path d="M1 4l10-2M1 8l10-2" stroke="#ddd"/><path d="M11 5h16M11 8h14M11 11h10" stroke="#555"/><path d="M1 14h16v5h8v7H10v-7H1" fill="none" stroke="#222"/></svg></button>
    <button class="rb"><svg viewBox="0 0 28 28"><rect x="1" y="2" width="20" height="18" fill="#fff" stroke="#557"/><path d="M1 6h20" stroke="#3b78c2" stroke-width="3"/><path d="M1 11h20M1 15h20M8 6v14M14 6v14" stroke="#557"/><ellipse cx="20" cy="19" rx="6" ry="3" fill="#ef860f"/><rect x="14" y="19" width="12" height="5" fill="#ef860f"/></svg></button>
    <button class="rb"><svg viewBox="0 0 28 28"><path d="M2 5h11v6l4 2v10H2z" fill="#ddd" stroke="#444"/><path d="M13 5h6v3h-6" fill="#ef860f"/><path d="M10 25l10-10c-1-4 3-7 7-5l-4 3 1 3 3-1c1 4-3 7-6 5l-9 8z" fill="#fff" stroke="#333"/></svg></button>
    <button class="rb"><svg viewBox="0 0 28 28"><path d="M5 1v26M21 1v26" stroke="#444"/><path d="M1 6h8v5H1zM1 17h8v5H1zM17 4h8v5h-8zM17 14h8v5h-8z" fill="#bbb" stroke="#444"/><path d="M11 9l5 4-5 4z" fill="#ef860f"/></svg></button>
    <button class="rb"><svg viewBox="0 0 28 28"><path d="M4 8l12-5 9 4v14l-12 5-9-4zM4 8l9 4 12-5M13 12v14M9 10v14" fill="#fff" stroke="#555"/></svg></button>
    <button class="rb"><svg viewBox="0 0 28 28"><path d="M1 14Q14 4 27 14Q14 22 1 14Z" fill="#cfd8c8" stroke="#333"/><circle cx="14" cy="13" r="5" fill="#4d9a2c"/><circle cx="14" cy="13" r="2" fill="#111"/></svg></button>
    <button class="rb"><svg viewBox="0 0 28 28"><path d="M3 21L8 6h12l5 15zM1 25h26M1 21h26" fill="none" stroke="#444"/></svg></button>
    <button class="rb"><svg viewBox="0 0 28 28"><rect x="1" y="4" width="18" height="15" fill="#fff" stroke="#333"/><rect x="9" y="10" width="18" height="15" fill="#ef860f" stroke="#333"/></svg></button>
    <button class="rb"><svg viewBox="0 0 28 28"><use href="#tool2"/><path d="M13 8l2-5h4M14 3l-4 3M22 11l4-6M20 3l6 3" fill="none" stroke="#ef860f" stroke-width="1.300"/></svg></button>
    <button class="rb"><svg viewBox="0 0 28 28"><path d="M1 15l10-6 10 5-8 9z" fill="#ddd" stroke="#444"/><path d="M2 5h16M2 3v4M18 3v4" stroke="#ef860f"/><circle cx="21" cy="18" r="5" fill="#fff" stroke="#333"/><path d="M13 24l5-3" stroke="#333" stroke-width="2"/></svg></button>
    <button class="rb gap"><svg viewBox="0 0 28 28"><ellipse cx="11" cy="16" rx="9" ry="8" fill="#777" stroke="#333"/><text x="9" y="20" class="info">i</text><path d="M18 7q6 2 8 8M20 4q5 1 7 6" fill="none" stroke="#bbb"/></svg></button>
    <button class="rb gap"><svg viewBox="0 0 28 28"><rect x="1" y="3" width="26" height="22" fill="#fff" stroke="#333"/><path d="M1 7h26" stroke="#333"/><ellipse cx="14" cy="16" rx="8" ry="7" fill="#2c84b5"/><path d="M8 14q6-4 12 0M9 19q6 3 10 0" stroke="#8fd0e8" fill="none"/></svg></button>
    <button class="rb gap"><svg viewBox="0 0 28 28"><circle cx="14" cy="14" r="12" fill="#fff" stroke="#444"/><path d="M14 4v10H7M14 2v2M14 24v2M2 14h2M24 14h2" fill="none" stroke="#444"/></svg></button>
    <button class="rb"><svg viewBox="0 0 28 28"><defs><linearGradient id="gSpec" x1="0" x2="0" y1="0" y2="1"><stop offset="0" stop-color="#e8282a"/><stop offset=".35" stop-color="#e8d928"/><stop offset=".65" stop-color="#28d84a"/><stop offset="1" stop-color="#2a6fe8"/></linearGradient></defs><rect x="3" y="3" width="12" height="22" fill="url(#gSpec)"/><path d="M13 8l12 16" stroke="#222" stroke-width="3"/></svg></button>
    <button class="rb"><svg viewBox="0 0 28 28"><path d="M2 25V12l10-8v21z" fill="#5b8fd0" stroke="#2a6fb5"/><path d="M4 19h12M4 14h10M12 4l12 2-8 5" fill="none" stroke="#e8c028"/><path d="M14 12l11 13" stroke="#222" stroke-width="3"/></svg></button>
    <button class="rb"><svg viewBox="0 0 28 28"><path d="M1 6h6l2-3h10l2 3h6v18H1z" fill="#fff" stroke="#333"/><path d="M7 9l12 12 3-3L9 7zM20 8l-12 11 3 3 12-12z" fill="#999" stroke="#333"/></svg></button>
    <button class="rb"><svg viewBox="0 0 28 28"><path d="M2 5h11v6l4 2v10H2z" fill="#ddd" stroke="#444"/><path d="M13 5h6v3h-6" fill="#ef860f"/><path d="M9 20h13v-4l5 6-5 5v-4H9z" fill="#fff" stroke="#333"/></svg></button>
  </aside>
</main>

<footer class="bottom">
  <button class="bb"><svg viewBox="0 0 24 24"><rect x="4" y="4" width="16" height="16" fill="#fff" stroke="#25306a" stroke-width="1.500"/></svg></button>
  <button class="bb"><svg viewBox="0 0 24 24"><rect x="3" y="2" width="18" height="20" fill="#fff" stroke="#2233cc" stroke-width="1.300"/><path d="M6 6h8v6H6zM8 15h5v4M18 5v14M15 8v7" fill="none" stroke="#e00000" stroke-width="1.200"/><circle cx="3" cy="2" r="1.500" fill="#e00000"/><circle cx="21" cy="22" r="1.500" fill="#e00000"/></svg></button>
  <button class="bb"><svg viewBox="0 0 24 24"><path d="M11 6l7-5v20l-7 3z" fill="#f090a8"/><path d="M3 12l7-4 7 3v7l-7 4-7-3z" fill="#fff" fill-opacity=".6" stroke="#e0a0a8"/><path d="M11 15l7-4v7l-6 3z" fill="#fff" stroke="#8cc8c0"/></svg></button>
  <button class="bb"><svg viewBox="0 0 24 24"><path d="M7 8l8-6h4v6zM4 14l4-5M4 18l4-5" fill="#b89ab8" stroke="#8a6a8a"/><rect x="9" y="8" width="10" height="15" fill="#fff" stroke="#666"/><path d="M11 11h6M11 14h6M11 17h6M11 20h6" stroke="#888"/></svg></button>
  <button class="bb"><svg viewBox="0 0 24 24"><path d="M3 12l9-10v5h9v10h-9v5z" fill="#b38ae0" stroke="#8a64b8"/></svg></button>
  <button class="bb"><svg viewBox="0 0 24 24"><path d="M21 12l-9-10v5H3v10h9v5z" fill="#8a8ae6" stroke="#6264b8"/></svg></button>
  <span class="cmd first-cmd">移动对象</span>
  <span class="cmd wcs">WCS视图<i class="tri tri-cmd"></i></span>
  <span class="cmd">批量高版本prt换低版本</span>
  <span class="cmd">删除组装</span>
  <span class="cmd">工件定位</span>
  <span class="cmd">打开当前零件目录</span>
  <span class="cmd">模型分析</span>
  <span class="cmd">3.实体着色</span>
  <span class="cmd">13.曲面中线</span>
  <span class="cmd">15.两点圆柱</span>
  <span class="cmd">中心线</span>
  <span class="cmd">清除高亮</span>
  <span class="cmd">角避空</span>
  <span class="cmd">样式<i class="tri tri-cmd"></i></span>
  <span class="cmd">背景<i class="tri tri-cmd"></i></span>
  <span class="vsep sep-d"></span>
  <i class="tri tri-end"></i>
</footer>

<div class="taskbar">
  <span class="tk tk1"></span><span class="tk tk2"></span><span class="tk tk3"></span><span class="tk tk4"></span><span class="tk tk5"></span>
</div>
<span class="watermark">UG爱好者论坛@17351605897</span>
</body>
</html>
```
FILE: styles.css
```css
* { box-sizing: border-box; }
html { margin: 0; padding: 0; height: 1297px; overflow: hidden; }
body {
  margin: 0; padding: 0;
  width: 2560px; height: 1297px; overflow: hidden; position: relative;
  display: flex; flex-direction: column; background: #fff; color: #141414;
  font: 20px/27px "Noto Sans", "Noto Sans CJK SC", sans-serif;
}
button { border: 0; background: none; padding: 0; margin: 0; display: block; }
i { font-style: normal; }
svg { display: block; }
.defs { position: absolute; }
.tiny { font: 5.5px "Liberation Sans", sans-serif; fill: #333; }
.tiny2 { font: 7px "Liberation Mono", monospace; fill: #333; }
.tiny3 { font: bold 7px "Liberation Sans", sans-serif; fill: #333; }
.p { font: bold 12px "Liberation Serif", serif; fill: #d01818; }
.info { font: bold 11px "Liberation Serif", serif; fill: #fff; }
.hidden { visibility: hidden; }

.tri { display: block; width: 0; height: 0; border: 5px solid transparent; border-top: 7px solid #222; border-bottom: 0; }

.topbar { height: 7px; flex: none; background: linear-gradient(90deg, #006a91, #067aa4); padding-top: 3px; }
.accent { display: block; width: 82px; height: 2px; margin-left: 128px; background: #f1c232; }

/* ribbon */
.ribbon { flex: none; height: 145px; display: flex; padding-top: 2px; border-bottom: 1px solid #ddd; }
.group { position: relative; height: 139px; display: flex; flex-direction: column; }
.group::after { content: ""; position: absolute; right: 0; top: 3px; bottom: 1px; width: 1px; background: #ddd; }
.g1 { width: 77px; } .g2 { width: 192px; } .g3 { width: 477px; } .g4 { width: 497px; }
.g5 { width: 93px; } .g6 { width: 382px; } .g7 { flex: 1; }
.g7::after { display: none; }
.body { height: 117px; flex: none; }
.center { display: flex; justify-content: center; padding-top: 4px; }
.glabel { flex: 1; display: flex; align-items: center; color: #00729c; line-height: 22px; }
.glabel span { flex: 1; text-align: center; }
.glabel .tri, .glabel .none { flex: none; margin: 0 10px 0 10px; }
.glabel .none { width: 10px; }
.stack { display: flex; flex-direction: column; align-items: flex-start; }
.g2 .stack { padding-left: 10px; }
.g2 .row { word-spacing: 2px; }
.row { height: 36px; display: flex; align-items: center; gap: 5px; padding: 0 6px 0 4px; white-space: nowrap; }
.row.on { background: #cde5ec; }
.row.off { color: #c9c9c9; }
.ic { width: 24px; height: 24px; flex: none; overflow: visible; }
.tool { position: relative; display: flex; flex-direction: column; align-items: center; text-align: center; white-space: nowrap; }
.label { margin-top: 5px; }
.tools { display: flex; gap: 12px; padding: 4px 0 0 13px; }
.big { width: 62px; height: 48px; }
.big-s { width: 42px; }
.cols { display: flex; padding-left: 5px; }
.col-a { width: 170px; } .col-b { width: 139px; }
.nx { width: 42px; height: 42px; margin: 0 0 6px 0; background: #009a97; transform: translate(-3px, 6px); }
.nx-red { display: block; width: 42px; height: 42px; overflow: hidden; transform: translate(6px, -6px); background: #8f1208; color: #fff; font: bold 24px/54px "Liberation Sans Narrow", "Liberation Sans", sans-serif; letter-spacing: -1px; text-align: center; }
.tri-start { margin-top: 5px; }
.vt { width: 47px; height: 48px; border-radius: 8px; background: linear-gradient(180deg, #2b7fe0, #1fa6ef 60%, #7fd6fb); border: 2px solid #a9d8f6; display: flex; justify-content: center; }
.vt span { color: #eaf7ff; font: bold 48px/46px "Liberation Sans", sans-serif; }
.anim { display: flex; gap: 13px; padding: 4px 0 0 14px; }
.ctl { width: 48px; height: 48px; }
.ctl-off { margin-left: 14px; }
.ctl-s { width: 32px; height: 32px; margin-top: 11px; flex: none; }
.more { margin-right: 18px; }
.first-more { margin-right: 16px; margin-left: -2px; }
.tri-more { position: absolute; left: 85px; top: 80px; border-width: 4px; border-top-width: 6px; }
.play { margin-right: -3px; }

/* toolbar */
.toolbar { flex: none; height: 40px; display: flex; align-items: center; padding: 0 0 0 16px; border-bottom: 2px solid #aaa; }
.burger { width: 16px; height: 14px; flex: none; }
.menu { margin-left: 7px; white-space: nowrap; width: 75px; }
.tri-menu { margin-left: 4px; }
.vsep { display: block; width: 1px; height: 32px; background: #ddd; flex: none; }
.sep-menu { margin: 0 14px 0 12px; }
.select { height: 33px; display: flex; align-items: center; justify-content: space-between; border: 1px solid #888; padding: 0 8px 0 2px; flex: none; }
.sel-a { width: 253px; } .sel-b { width: 265px; }
.tri-big { border-width: 6px; border-top-width: 8px; }
.funnel { width: 26px; height: 28px; margin: 0 12px 0 10px; flex: none; }
.tb { width: 34px; height: 32px; display: flex; align-items: center; justify-content: center; flex: none; }
.tb svg { width: 28px; height: 28px; }
.tb.on { background: #cde5ec; }
.w30 { width: 30px; }
.t36 { width: 36px; }
.ml1 { margin-left: 1px; } .ml2 { margin-left: 2px; } .ml3 { margin-left: 3px; } .ml6 { margin-left: 6px; } .ml9 { margin-left: 9px; } .ml10 { margin-left: 10px; }
.tri-tb { flex: none; }
.sep-a { margin: 0 12px 0 8px; }
.sep-b { margin: 0 12px 0 6px; }
.sep-c { margin-left: 5px; }
.tri-end { margin-left: auto; margin-right: 9px; flex: none; border-width: 5px; border-top-width: 7px; }

/* main */
.main { flex: none; height: 1058px; display: flex; }
.left { width: 1715px; flex: none; display: flex; flex-direction: column; }
.tabs { height: 68px; flex: none; display: flex; align-items: flex-end; border-bottom: 2px solid #00628a; }
.tab { height: 36px; display: flex; align-items: center; white-space: nowrap; padding-left: 7px; width: 132px; font-size: 21px; }
.tab-ic { width: 15px; height: 18px; margin-right: 5px; }
.tab-on { width: 183px; background: #00628a; color: #fff; }
.tab-ic2 { width: 15px; height: 18px; margin-right: 4px; flex: none; }
.tab-ic3 { width: 12px; height: 14px; margin: 0 5px 0 5px; flex: none; }
.close { font-size: 20px; line-height: 20px; font-weight: bold; }
.viewport { flex: 1; position: relative; overflow: hidden; background: linear-gradient(180deg, #b4b5b6 0%, #d2d3d4 45%, #e5e6e8 82%); }
.cross { position: absolute; background: #33363a; }
.v1 { left: 893px; top: 0; width: 1px; height: 218px; }
.v2 { left: 893px; top: 284px; width: 1px; bottom: 0; }
.h1 { left: 0; top: 251px; width: 860px; height: 1px; }
.h2 { left: 926px; right: 0; top: 251px; height: 1px; }
.triad-main { position: absolute; left: 900px; top: 619px; width: 240px; height: 190px; }
.triad-mini { position: absolute; left: 50px; top: 829px; width: 170px; height: 150px; }
.tr { font: 15px "Liberation Sans", sans-serif; }
.red { fill: #d14545; } .cyan { fill: #2aa5d8; } .green { fill: #2f9a3c; } .blue { fill: #2a5cf0; }

.side { width: 47px; flex: none; position: relative; display: flex; flex-direction: column; align-items: flex-start; padding: 41px 0 0 6px; border-right: 1px solid #aaa; }
.side::before { content: ""; position: absolute; right: -1px; top: 0; width: 1px; height: 30px; background: #fff; }
.side-ic { width: 32px; height: 32px; margin-bottom: 9px; flex: none; }
.vtabs { display: flex; flex-direction: column; align-items: flex-start; gap: 9px; margin: 2px 0 0 4px; }
.vtabs span { writing-mode: vertical-rl; text-orientation: sideways; line-height: 20px; white-space: nowrap; font-size: 20px; }
.vt-off { color: #c9c9c9; }
.vtabs .vt-on { color: #141414; margin: 1px 0 5px; }
.side-rule { display: block; width: 36px; height: 1px; background: #ddd; margin-top: 6px; flex: none; margin-left: 1px; }
.tri-left { position: absolute; left: 14px; top: 1039px; width: 0; height: 0; border: 5px solid transparent; border-right: 6px solid #222; border-left: 0; }

.panel { width: 767px; flex: none; margin-top: 30px; padding: 0 14px 0 16px; display: flex; flex-direction: column; }
.ptitle { height: 38px; flex: none; display: flex; align-items: center; gap: 12px; font-size: 21px; margin-left: -3px; }
.winbox { width: 20px; height: 18px; border: 2px solid #222; border-top-width: 4px; }
.pbtns { flex: none; display: flex; margin: 6px 0 4px 2px; gap: 4px; }
.pb { width: 30px; height: 32px; display: flex; align-items: center; justify-content: center; }
.pb svg { width: 28px; height: 28px; }
.pb.on { width: 32px; background: #cde5ec; margin-left: -2px; }
.pb.box { width: 32px; border: 1px solid #ccc; margin-left: 2px; }
.pb.box svg { width: 30px; height: 30px; }
.table { flex: 1; min-height: 0; border: 1px solid #ddd; display: flex; flex-direction: column; font-size: 21px; border-width: 1px 1px 2px 1px; padding-left: 1px; }
.thead { flex: none; height: 31px; display: flex; background: #efefef; border-bottom: 1px solid #ddd; line-height: 31px; }
.thead span { padding-left: 6px; border-right: 1px solid #ddd; }
.thead .c4 { border-right: 0; padding-left: 5px; }
.c1 { width: 319px; flex: none; } .c2 { width: 89px; flex: none; } .c3 { width: 89px; flex: none; } .c4 { flex: 1; }
.tbody { flex: 1; min-height: 0; overflow: hidden; position: relative; }
.tr-row { height: 32px; display: flex; border-bottom: 1px solid #eee; }
.tr-row:nth-child(odd) { background: #f9f9f9; }
.tr-row .c1 { display: flex; align-items: center; border-right: 1px solid #000; }
.tr-row .c2, .tr-row .c3 { border-right: 1px solid #eee; }
.nm { padding-top: 2px; }
.lvl0 { padding-left: 2px; gap: 6px; }
.lvl1 { padding-left: 21px; }
.tw { position: relative; display: block; width: 15px; height: 15px; background: #fff; border: 1px solid #ddd; flex: none; }
.tw .h { position: absolute; left: 1px; right: 1px; top: 6px; height: 1px; background: #222; }
.tw .v { position: absolute; top: 1px; bottom: 1px; left: 6px; width: 1px; background: #222; }
.lvl1 .tw { z-index: 1; }
.tw-none { display: block; width: 17px; height: 1px; margin-left: 7px; margin-right: -10px; border-bottom: 1px dotted #999; flex: none; }
.node { width: 15px; height: 16px; margin: 0 4px 0 3px; flex: none; }
.dots { position: absolute; left: 28px; top: 32px; height: 224px; width: 0; border-left: 1px dotted #aaa; z-index: 1; }
.hscroll { flex: none; height: 28px; margin-top: 1px; margin-left: -1px; background: #eee; display: flex; align-items: center; position: relative; padding-left: 10px; }
.sc-arrow { width: 10px; height: 16px; flex: none; }
.thumb { display: block; width: 50px; height: 28px; background: #ccc; margin-left: 11px; flex: none; }
.sc-right { margin-left: auto; margin-right: 10px; }
.pfoot { flex: none; height: 2px; margin: 6px -6px 6px -8px; background: #ccc; }

.rail { flex: 1; margin-top: 30px; background: #d9d9d9; border-left: 1px solid #ccc; display: flex; flex-direction: column; }
.rb { width: 30px; height: 42.5px; flex: none; display: flex; align-items: center; justify-content: center; }
.rb svg { width: 28px; height: 28px; }
.rb.first { height: 26px; }
.rb.first svg { width: 18px; height: 18px; }
.rb.second { margin-top: 13px; }
.rb.active { background: #fff; box-shadow: 0 0 0 1px #c8c8c8; }
.rb.gap { margin-top: 10px; }

/* bottom */
.bottom { flex: none; height: 39px; display: flex; align-items: center; padding-left: 12px; gap: 12.4px; white-space: nowrap; }
.bb { width: 24px; height: 24px; flex: none; margin-right: -.4px; }
.bb svg { width: 24px; height: 24px; }
.first-cmd { margin-left: -2px; }
.cmd { display: flex; align-items: center; flex: none; }
.wcs { letter-spacing: 1.4px; }
.tri-cmd { margin-left: 5px; border-width: 4px; border-top-width: 6px; }
.sep-d { margin-left: 5px; }
.bottom .tri-end { margin-right: 9px; }

.taskbar { flex: 1; display: flex; background: #332a1f; }
.tk { display: block; flex: none; }
.tk1 { width: 357px; background: #2c2a1f; } .tk2 { width: 46px; background: #4a7038; } .tk3 { width: 27px; background: #4f3d35; }
.tk4 { width: 7px; background: #3a2a22; } .tk5 { width: 85px; background: #60514a; }
.watermark { position: absolute; left: 2364px; top: 1276px; font: 14px/18px "Liberation Serif", "Noto Sans CJK SC", serif; letter-spacing: .7px; color: #a8a8a8; white-space: nowrap; }
```
